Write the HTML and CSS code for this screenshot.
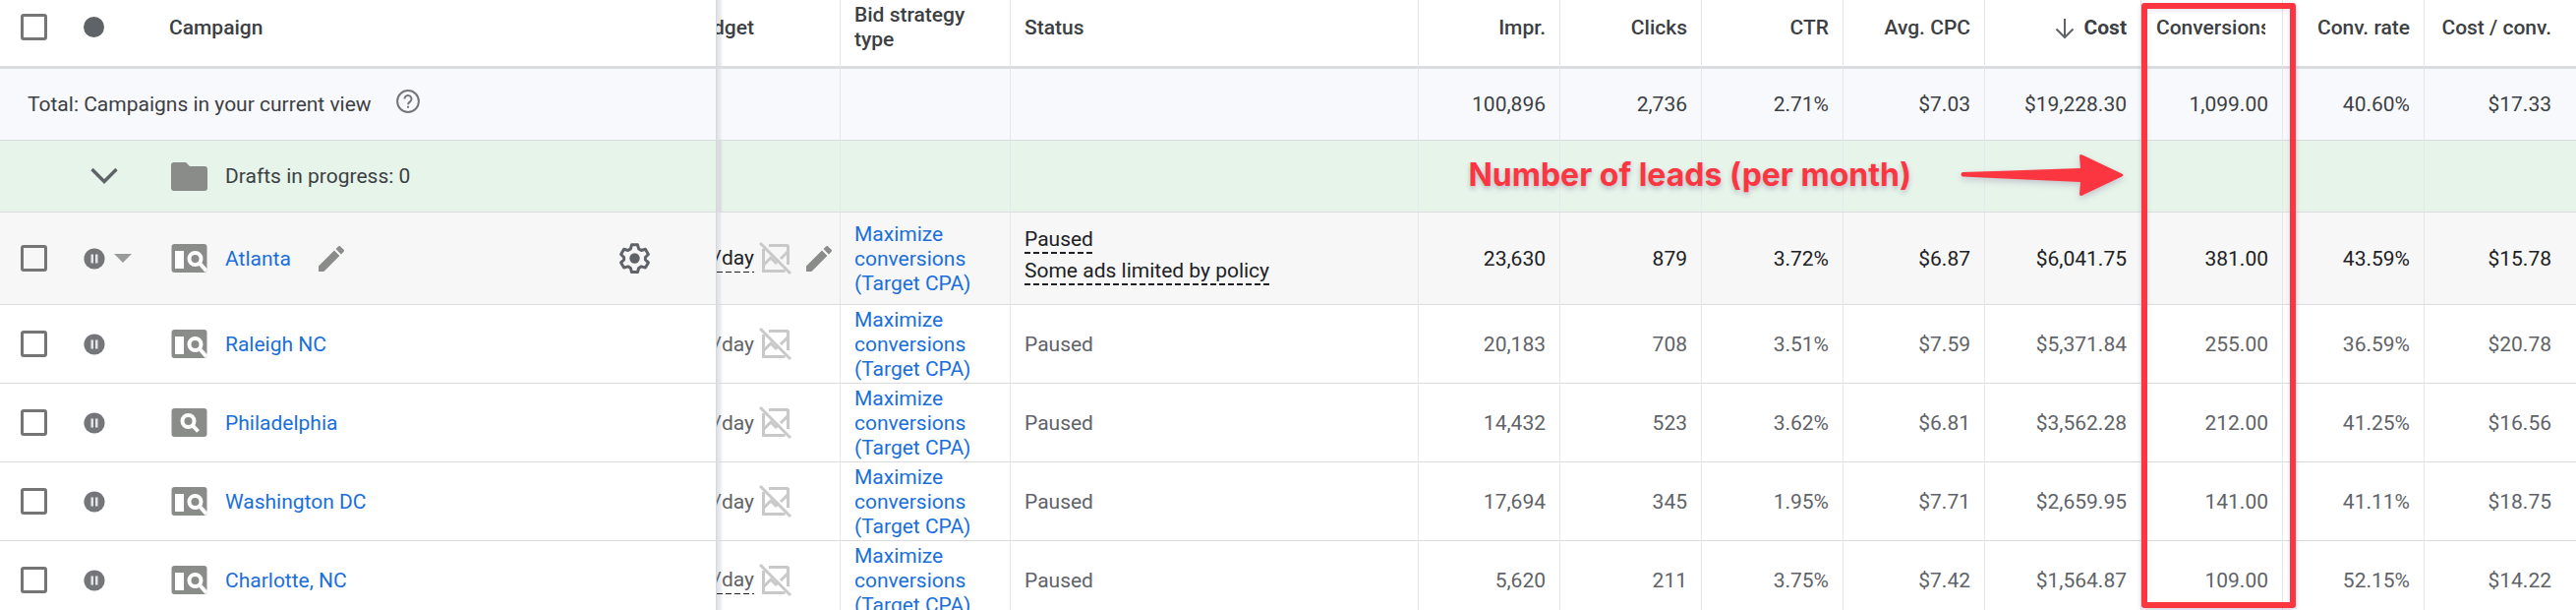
FILE: index.html
```html
<!DOCTYPE html>
<html lang="en">
<head>
<meta charset="utf-8">
<title>Campaigns</title>
<link rel="stylesheet" href="styles.css">
</head>
<body>
<svg class="sprite" aria-hidden="true">
  <symbol id="i-pause" viewBox="0 0 22 22"><circle cx="11" cy="11" r="10.6" fill="#757679"/><path d="M7.500 6.500h2.500v9H7.500zM12 6.500h2.500v9H12z" fill="#e4e4e4"/></symbol>
  <symbol id="i-search-display" viewBox="0 0 37 29"><rect x=".5" width="36" height="29" rx="3" fill="#8a8c8a"/><path d="M4 7h9v18H4z" fill="#fff"/><circle cx="24.500" cy="15" r="6" fill="none" stroke="#fff" stroke-width="4"/><path d="M28.500 19L36 27.500" stroke="#fff" stroke-width="4"/></symbol>
  <symbol id="i-search" viewBox="0 0 37 29"><rect x=".5" width="36" height="29" rx="3" fill="#8a8c8a"/><circle cx="17.500" cy="13" r="6" fill="none" stroke="#fff" stroke-width="4"/><path d="M21.500 17L27.500 23.500" stroke="#fff" stroke-width="4"/></symbol>
  <symbol id="i-folder" viewBox="0 0 37 29"><path d="M3 0h12l4 4h15a3 3 0 0 1 3 3v19a3 3 0 0 1-3 3H3a3 3 0 0 1-3-3V3a3 3 0 0 1 3-3z" fill="#8a8c8a"/></symbol>
  <symbol id="i-pencil" viewBox="3 3 18 18"><path d="M3 17.250V21h3.750L17.810 9.940l-3.750-3.750L3 17.250zM20.710 7.040a1 1 0 0 0 0-1.410l-2.340-2.340a1 1 0 0 0-1.410 0l-1.830 1.830 3.750 3.750 1.830-1.830z" fill="#8a8c8a"/></symbol>
  <symbol id="i-nochart" viewBox="0 0 33 33"><g fill="none" stroke="#c9c9c9" stroke-width="3"><path d="M10 3.500h18.500a1 1 0 0 1 1 1V23M4.500 7v22.500h22"/><path d="M5 23l7-7 5 5 3-3M22 17l7-7"/><path d="M1 1l31 31"/></g></symbol>
</svg>
<main class="view">
<table class="grid">
  <colgroup>
    <col class="c-check"><col class="c-state"><col class="c-name"><col class="c-budget"><col class="c-bid"><col class="c-status">
    <col class="c-num"><col class="c-num"><col class="c-num"><col class="c-num"><col class="c-cost"><col class="c-conv"><col class="c-num"><col class="c-last">
  </colgroup>
  <thead>
    <tr class="head">
      <th class="check"><input type="checkbox" aria-label="Select all campaigns"></th>
      <th class="state"><span class="dot"></span></th>
      <th class="campaign">Campaign</th>
      <th class="budget"><div class="clip"><span>Budget</span></div></th>
      <th class="bid">Bid strategy type</th>
      <th>Status</th>
      <th class="num">Impr.</th><th class="num">Clicks</th><th class="num">CTR</th><th class="num">Avg. CPC</th>
      <th class="num sorted"><svg class="sort" viewBox="0 0 20 22"><path d="M10 1v19M1.500 11.500L10 20l8.500-8.500" fill="none" stroke="#5f6368" stroke-width="2"/></svg>Cost</th>
      <th class="num"><div class="cut">Conversions</div></th><th class="num">Conv. rate</th><th class="num">Cost / conv.</th>
    </tr>
  </thead>
  <tbody>
    <tr class="total">
      <td class="title" colspan="3"><div class="name">Total: Campaigns in your current view<svg class="help" viewBox="0 0 24 24"><circle cx="12" cy="12" r="10.900" fill="none" stroke="#757679" stroke-width="2"/><path d="M8.500 9.500a3.500 3.500 0 1 1 5.700 2.700c-1.300 1.100-2.200 1.600-2.200 3.100" fill="none" stroke="#757679" stroke-width="2"/><path d="M11 16.800h2v2h-2z" fill="#757679"/></svg></div></td>
      <td class="budget"></td><td></td><td></td>
      <td class="num">100,896</td><td class="num">2,736</td><td class="num">2.71%</td><td class="num">$7.03</td><td class="num">$19,228.30</td><td class="num">1,099.00</td><td class="num">40.60%</td><td class="num">$17.33</td>
    </tr>
    <tr class="drafts">
      <td class="check"></td>
      <td class="state"><button class="expand" aria-label="Expand drafts"><svg viewBox="0 0 28 18"><path d="M1.500 2L14 14.500 26.500 2" fill="none" stroke="#5f6368" stroke-width="3.400"/></svg></button></td>
      <td class="campaign"><div class="name"><svg class="kind"><use href="#i-folder"/></svg><span>Drafts in progress: 0</span></div></td>
      <td class="budget"></td><td></td><td></td><td></td><td></td><td></td><td></td><td></td><td></td><td></td><td></td>
    </tr>
    <tr class="row active">
      <td class="check"><input type="checkbox" aria-label="Select Atlanta"></td>
      <td class="state"><div class="pick"><svg class="pause"><use href="#i-pause"/></svg><svg class="caret" viewBox="0 0 18 9"><path d="M0 0h18L9 9z" fill="#999b9b"/></svg></div></td>
      <td class="campaign"><div class="name"><svg class="kind"><use href="#i-search-display"/></svg><a href="#">Atlanta</a><button class="edit" aria-label="Rename"><svg class="pencil"><use href="#i-pencil"/></svg></button><button class="gear" aria-label="Settings"><svg viewBox="0 0 31 31"><path d="M12.500 1.800h6l1.100 4.100 2.700 1.600 4.100-1.200 3 5.200-3 3v2.400l3 3-3 5.200-4.100-1.200-2.700 1.600-1.100 4.100h-6l-1.100-4.100-2.700-1.600-4.100 1.200-3-5.200 3-3v-2.400l-3-3 3-5.200 4.100 1.200 2.700-1.600z" fill="none" stroke="#5f6368" stroke-width="3" stroke-linejoin="round"/><circle cx="15.500" cy="15.500" r="5.200" fill="#5f6368"/></svg></button></div></td>
      <td class="budget"><div class="clip tools"><span class="hint thin">/day</span><svg class="nochart"><use href="#i-nochart"/></svg><button class="edit" aria-label="Edit budget"><svg class="pencil"><use href="#i-pencil"/></svg></button></div></td>
      <td class="bid"><a href="#">Maximize conversions (Target CPA)</a></td>
      <td class="status"><div class="notes"><span class="hint">Paused</span><span class="hint">Some ads limited by policy</span></div></td>
      <td class="num">23,630</td><td class="num">879</td><td class="num">3.72%</td><td class="num">$6.87</td><td class="num">$6,041.75</td><td class="num">381.00</td><td class="num">43.59%</td><td class="num">$15.78</td>
    </tr>
    <tr class="row">
      <td class="check"><input type="checkbox" aria-label="Select Raleigh NC"></td>
      <td class="state"><svg class="pause"><use href="#i-pause"/></svg></td>
      <td class="campaign"><div class="name"><svg class="kind"><use href="#i-search-display"/></svg><a href="#">Raleigh NC</a></div></td>
      <td class="budget"><div class="clip tools"><span>/day</span><svg class="nochart"><use href="#i-nochart"/></svg></div></td>
      <td class="bid"><a href="#">Maximize conversions (Target CPA)</a></td>
      <td class="status">Paused</td>
      <td class="num">20,183</td><td class="num">708</td><td class="num">3.51%</td><td class="num">$7.59</td><td class="num">$5,371.84</td><td class="num">255.00</td><td class="num">36.59%</td><td class="num">$20.78</td>
    </tr>
    <tr class="row">
      <td class="check"><input type="checkbox" aria-label="Select Philadelphia"></td>
      <td class="state"><svg class="pause"><use href="#i-pause"/></svg></td>
      <td class="campaign"><div class="name"><svg class="kind"><use href="#i-search"/></svg><a href="#">Philadelphia</a></div></td>
      <td class="budget"><div class="clip tools"><span>/day</span><svg class="nochart"><use href="#i-nochart"/></svg></div></td>
      <td class="bid"><a href="#">Maximize conversions (Target CPA)</a></td>
      <td class="status">Paused</td>
      <td class="num">14,432</td><td class="num">523</td><td class="num">3.62%</td><td class="num">$6.81</td><td class="num">$3,562.28</td><td class="num">212.00</td><td class="num">41.25%</td><td class="num">$16.56</td>
    </tr>
    <tr class="row">
      <td class="check"><input type="checkbox" aria-label="Select Washington DC"></td>
      <td class="state"><svg class="pause"><use href="#i-pause"/></svg></td>
      <td class="campaign"><div class="name"><svg class="kind"><use href="#i-search-display"/></svg><a href="#">Washington DC</a></div></td>
      <td class="budget"><div class="clip tools"><span>/day</span><svg class="nochart"><use href="#i-nochart"/></svg></div></td>
      <td class="bid"><a href="#">Maximize conversions (Target CPA)</a></td>
      <td class="status">Paused</td>
      <td class="num">17,694</td><td class="num">345</td><td class="num">1.95%</td><td class="num">$7.71</td><td class="num">$2,659.95</td><td class="num">141.00</td><td class="num">41.11%</td><td class="num">$18.75</td>
    </tr>
    <tr class="row">
      <td class="check"><input type="checkbox" aria-label="Select Charlotte, NC"></td>
      <td class="state"><svg class="pause"><use href="#i-pause"/></svg></td>
      <td class="campaign"><div class="name"><svg class="kind"><use href="#i-search-display"/></svg><a href="#">Charlotte, NC</a></div></td>
      <td class="budget"><div class="clip tools"><span class="hint thin">/day</span><svg class="nochart"><use href="#i-nochart"/></svg></div></td>
      <td class="bid"><a href="#">Maximize conversions (Target CPA)</a></td>
      <td class="status">Paused</td>
      <td class="num">5,620</td><td class="num">211</td><td class="num">3.75%</td><td class="num">$7.42</td><td class="num">$1,564.87</td><td class="num">109.00</td><td class="num">52.15%</td><td class="num">$14.22</td>
    </tr>
  </tbody>
</table>
<div class="callout"><span>Number of leads (per month)</span><svg class="arrow" viewBox="0 0 166 44"><path d="M2 19L122 15 121 3Q121 0 124 1.500L164 20.500Q167 22 164 23.500L124 42.500Q121 44 121 41L122 29 2 23.500Q-1 21 2 19z" fill="#fb3640"/></svg></div>
<div class="marker"></div>
</main>
</body>
</html>
```
FILE: styles.css
```css
* { box-sizing: border-box; }
body {
  margin: 0;
  background: #fff;
  color: #5f6368;
  font: 400 21px/25px Roboto, "Liberation Sans", sans-serif;
}
.sprite { display: none; }
.view { position: relative; height: 100vh; overflow: hidden; }
.grid { width: 100%; table-layout: fixed; border-collapse: separate; border-spacing: 0; }
.c-check { width: 70px; }
.c-state { width: 85px; }
.c-name { width: 574px; }
.c-budget { width: 126px; }
.c-bid { width: 173px; }
.c-num { width: 144px; }
.c-cost { width: 159px; }
.c-conv { width: 144px; }
.c-last { width: 154px; }

th, td {
  padding: 0 14px;
  border-right: 1px solid #e4e8ea;
  border-bottom: 1px solid #dadce0;
  text-align: left;
  vertical-align: middle;
}
th:last-child, td:last-child { padding-right: 25px; border-right: 0; }
.check, .state { border-right: 0; }
.campaign, .title { border-right-color: #d5d7db; }
th { height: 70px; padding-bottom: 11px; border-bottom: 3px solid #dadce0; color: #3c4043; font-weight: 500; }
.sorted { font-weight: 700; }
.num { text-align: right; white-space: nowrap; }

.total td { height: 73px; background-color: #f8f9fc; color: #3c4043; }
.drafts td { height: 73px; background-color: #e6f4ea; color: #3c4043; }
.row td { height: 80px; }
.active td { height: 94px; background-color: #f7f7f7; color: #202124; }
.row .num, .row .bid, .row .status { padding-top: 2px; }

.check { padding: 0 0 0 21px; }
.state { padding: 0 0 0 15px; }
.campaign { padding-left: 17px; }
.head .check, .head .state { padding-bottom: 13px; }
.title { padding-left: 28px; }
.grid .budget {
  padding: 0;
  background-image: linear-gradient(to right, #dfe1e4, #ebecef 4px, #f5f6f7 5px, transparent 7px);
  background-repeat: no-repeat;
}
.grid .drafts .budget { background-image: linear-gradient(to right, #dadce0 4px, transparent 6px); }
.grid .head .budget { padding-bottom: 11px; }

input[type="checkbox"] {
  display: block;
  width: 27px;
  height: 27px;
  margin: 0;
  appearance: none;
  border: 3px solid #757575;
  border-radius: 3px;
  background: transparent;
}
svg { display: block; flex: none; }
a { color: #1a6fdb; text-decoration: none; }
button { padding: 0; border: 0; background: none; }
.dot { display: block; width: 21px; height: 21px; border-radius: 50%; background: #5f6368; }
.pause { width: 22px; height: 22px; }
.pick { display: flex; align-items: center; gap: 9px; }
.caret { width: 18px; height: 9px; }
.expand { display: block; margin-left: 7px; }
.expand svg { width: 28px; height: 18px; }
.help { width: 24px; height: 24px; margin: 0 0 6px 25px; }
.sort { display: inline-block; width: 20px; height: 22px; margin-right: 10px; vertical-align: -5px; }

.name { display: flex; align-items: center; }
.name a { padding-top: 2px; }
.kind { width: 37px; height: 29px; margin: 0 18px 0 2px; }
.pencil { width: 26px; height: 26px; }
.name .edit { margin-left: 28px; }
.gear { margin: 0 53px 0 auto; }
.gear svg { width: 31px; height: 31px; }

.clip { display: flex; align-items: center; justify-content: flex-end; width: 38px; overflow: hidden; }
.tools { justify-content: flex-start; width: auto; }
.tools > span { width: 38px; padding-top: 2px; display: flex; justify-content: flex-end; }
.nochart { width: 33px; height: 33px; margin-left: 5px; }
.tools .edit { margin-left: 15px; }
.notes { display: flex; flex-direction: column; align-items: flex-start; gap: 5px; padding-bottom: 6px; }
.hint {
  padding-bottom: 2px;
  background: repeating-linear-gradient(to right, #202124 0 6px, transparent 6px 9px) bottom left / 100% 2px no-repeat;
}
.thin { background-size: 100% 1px; }
.cut { width: 112px; padding-left: 1px; overflow: hidden; text-align: left; }

.callout {
  position: absolute;
  top: 154px;
  right: 460px;
  display: flex;
  align-items: center;
  gap: 50px;
  color: #fb3640;
  font-family: Inter, Roboto, sans-serif;
  font-size: 32px;
  font-weight: 700;
  line-height: 48px;
  white-space: nowrap;
  text-shadow: 0 3px 5px rgba(90, 60, 120, 0.3);
}
.arrow { width: 166px; height: 44px; filter: drop-shadow(0 3px 3px rgba(90, 60, 120, 0.25)); }
.marker {
  position: absolute;
  top: 3px;
  right: 285px;
  bottom: 2px;
  width: 157px;
  border: 6px solid #fb3640;
  border-radius: 3px;
  box-shadow: 0 2px 5px rgba(90, 60, 120, 0.25), inset 0 2px 5px rgba(90, 60, 120, 0.12);
}
```
